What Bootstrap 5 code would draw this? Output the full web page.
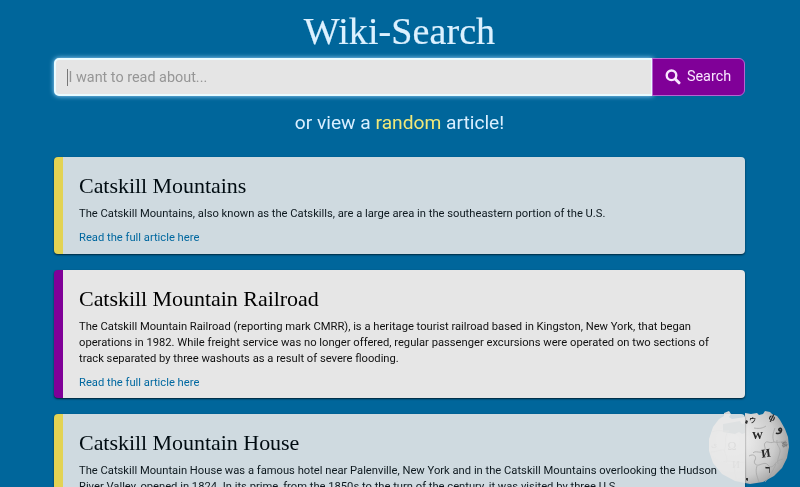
<!DOCTYPE html>
<html lang="en">
<head>
<meta charset="utf-8">
<meta name="viewport" content="width=device-width, initial-scale=1">
<title>Wiki-Search</title>
<link href="https://cdn.jsdelivr.net/npm/bootstrap@5.3.0/dist/css/bootstrap.min.css" rel="stylesheet">
<style>
  html, body { height: 487px; overflow: hidden; }
  body { background: #00669b; font-family: Roboto, sans-serif; color: #d9efff; }
  .page { width: 691px; margin-left: 54px; position: relative; z-index: 1; height: 487px; overflow: visible; }
  .brand { font: 400 38px/46px "Liberation Serif", serif; padding-top: 8px; height: 58px; color: #dcf1ff; letter-spacing: .08px; -webkit-text-stroke: .2px #dcf1ff; }
  .search { height: 38px; }
  .search .form-control { height: 38px; background: #e5e5e5; border: 2px solid #e9fbff; border-radius: 5px 0 0 5px; padding: 0 12.5px; font-size: 14.4px; color: #222; box-shadow: 0 0 5px #a6dcff; }
  .search .form-control::placeholder { color: #969696; opacity: 1; }
  .caret { left: 14px; top: 11px; width: 1px; height: 17px; background: #777; z-index: 6; }
  .search .btn { width: 93px; background: #800098; border: 1px solid #b565d0; border-radius: 0 6px 6px 0; color: #f9e6ff; font-size: 14.4px; padding: 0 1px 0 0; gap: 6px; }
  .random-line { font-size: 19.2px; line-height: 28px; margin: 13px 0 20px; }
  .random-line a { color: #f0e878; }
  .result { border: 0; border-left: 9px solid #ffe14b; border-radius: 4px; background: #e9e9e9; color: #101010; padding: 16px 8px 0 16px; margin-bottom: 16px; opacity: .89; box-shadow: 0 1px 2px rgba(0,0,0,.7); }
  .result.active { background: #e6e6e6; border-left-color: #800098; opacity: 1; }
  .result h2 { font: 400 22px/26px "Liberation Serif", serif; letter-spacing: -.04px; margin: 0 0 7px; color: #000; }
  .result p { font-size: 11.2px; line-height: 16px; margin: 0 0 8px; }
  .result a { font-size: 11.2px; line-height: 16px; color: #0068a0; }
  .globe { position: fixed; left: 707px; top: 409px; z-index: 0; }
</style>
<script src="https://cdn.jsdelivr.net/npm/bootstrap@5.3.0/dist/js/bootstrap.bundle.min.js"></script>
</head>
<body>
<svg class="globe" width="84" height="78" viewBox="0 0 84 78" aria-hidden="true">
  <defs>
    <radialGradient id="ball" cx=".3" cy=".4" r=".75">
      <stop offset="0" stop-color="#f4f4f4"/><stop offset=".35" stop-color="#e2e2e2"/><stop offset=".7" stop-color="#cccccc"/><stop offset="1" stop-color="#9c9c9c"/>
    </radialGradient>
  </defs>
  <path fill="url(#ball)" d="M12 10 17 7 17 4 22 2 24 5 22 8 25 10 38 8 38 4 44 5 50 4 52 6 56 5 58 2 63 3 65 5 70 7 73 11 78 20 81 28 82 38 80 49 75 59 67 67 56 73 43 75 28 72 15 65 6 54 2 42 2 30 6 18Z"/>
  <path fill="#8ca5b0" d="M16 15 33 12 35 15 38 14 38 24 35 25 32 23 28 25 16 23Z"/>
  <g fill="none" stroke="#a4a4a4" stroke-width=".8">
    <path d="M47 19c6 1 9 0 12-2m9 2c-2 5-3 9-1 14-5 2-7-2-9 1s2 5-1 8-9-1-11 2M67 33c4 1 8 0 13-2M42 47c5-3 8 1 6 4s1 6 4 5 7-3 9 0 5 2 7-1 4-4 8-5M70 31c-1 6 4 7 3 12s-3 7-2 12M50 57c-2 6 0 10 2 16M69 55c-3 6-5 11-11 18"/>
    <path stroke="#c2c2c2" d="M5 23c7-3 11 0 17-1M20 24c-3 7 0 9-2 15s4 8 1 15M4 43c7 0 11-4 14-1M16 53c7-3 12 2 22 0M28 56c-1 6 0 11 2 16"/>
  </g>
  <g fill="#262626" font-family="Liberation Serif, serif" text-anchor="middle">
    <text x="50.5" y="30" font-size="11" font-weight="bold">W</text>
    <text transform="translate(59.5 48) rotate(-8)" font-size="12" font-weight="bold">И</text>
    <text transform="translate(45 13) rotate(5)" font-size="7" font-weight="bold">ウ</text>
    <text transform="translate(64 11) rotate(25)" font-size="9" font-weight="bold">ф</text>
    <text transform="translate(73 23) rotate(10)" font-size="12" font-weight="bold">و</text>
    <text transform="translate(76 36) rotate(75)" font-size="6" fill="#555">維</text>
    <text x="61" y="64" font-size="11" font-weight="bold">ר</text>
    <text x="25" y="41" font-size="12" fill="#777">Ω</text>
    <text x="29" y="59" font-size="11" fill="#888">И</text>
    <text x="7" y="38" font-size="8" fill="#999">ی</text>
  </g>
  <path fill="#333" d="m39 11 2 1-1 3-2-1ZM39 69l2 0 0 3-2-1Z"/>
</svg>
<main class="page">
  <h1 class="brand text-center m-0">Wiki-Search</h1>
  <form class="search input-group flex-nowrap position-relative">
    <input class="form-control" type="text" placeholder="I want to read about..." aria-label="Search">
    <span class="caret position-absolute"></span>
    <button class="btn d-flex align-items-center justify-content-center" type="button">
      <svg width="16" height="16" viewBox="0 0 16 16" fill="none" stroke="currentColor" aria-hidden="true"><circle cx="6.5" cy="6.3" r="4.8" stroke-width="2.4"/><path d="m10.2 10 3.8 3.8" stroke-width="3" stroke-linecap="round"/></svg>
      Search
    </button>
  </form>
  <p class="random-line text-center">or view a <a class="text-decoration-none" href="#">random</a> article!</p>
  <article class="card result" style="height:96.5px">
    <h2>Catskill Mountains</h2>
    <p>The Catskill Mountains, also known as the Catskills, are a large area in the southeastern portion of the U.S.</p>
    <a class="text-decoration-none" href="#">Read the full article here</a>
  </article>
  <article class="card result active" style="height:128.8px">
    <h2>Catskill Mountain Railroad</h2>
    <p>The Catskill Mountain Railroad (reporting mark CMRR), is a heritage tourist railroad based in Kingston, New York, that began<br>operations in 1982. While freight service was no longer offered, regular passenger excursions were operated on two sections of<br>track separated by three washouts as a result of severe flooding.</p>
    <a class="text-decoration-none" href="#">Read the full article here</a>
  </article>
  <article class="card result" style="height:113px">
    <h2>Catskill Mountain House</h2>
    <p class="text-nowrap">The Catskill Mountain House was a famous hotel near Palenville, New York and in the Catskill Mountains overlooking the Hudson<br>River Valley, opened in 1824. In its prime, from the 1850s to the turn of the century, it was visited by three U.S.</p>
  </article>
</main>
</body>
</html>
